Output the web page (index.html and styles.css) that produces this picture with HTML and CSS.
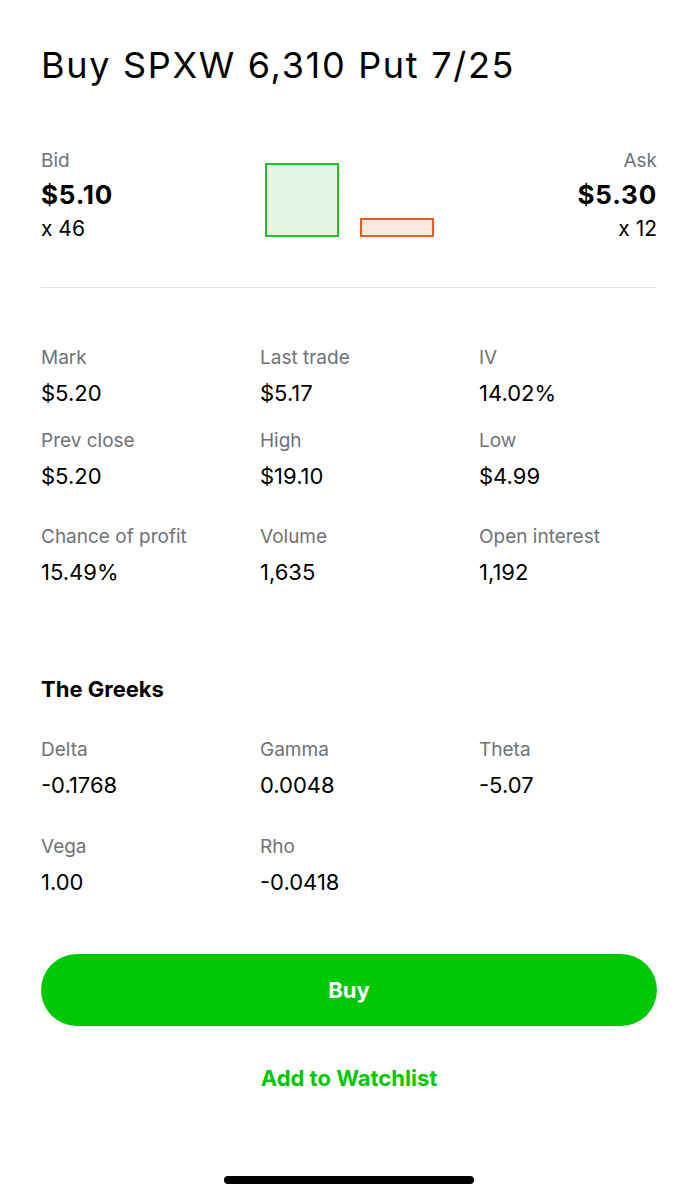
FILE: index.html
```html
<!DOCTYPE html>
<html lang="en">
<head>
<meta charset="utf-8">
<title>Buy SPXW 6,310 Put 7/25</title>
<link rel="stylesheet" href="styles.css">
</head>
<body>
<main class="page">
  <h1 class="title">Buy SPXW 6,310 Put 7/25</h1>

  <section class="quote">
    <div class="quote-side">
      <div class="label">Bid</div>
      <div class="quote-price">$5.10</div>
      <div class="quote-size">x 46</div>
    </div>
    <div class="bars">
      <div class="bar bar--bid"></div>
      <div class="bar bar--ask"></div>
    </div>
    <div class="quote-side quote-side--right">
      <div class="label">Ask</div>
      <div class="quote-price">$5.30</div>
      <div class="quote-size">x 12</div>
    </div>
  </section>

  <hr class="divider">

  <section class="grid stats">
    <div class="cell"><div class="label">Mark</div><div class="value">$5.20</div></div>
    <div class="cell"><div class="label">Last trade</div><div class="value">$5.17</div></div>
    <div class="cell"><div class="label">IV</div><div class="value">14.02%</div></div>
    <div class="cell"><div class="label">Prev close</div><div class="value">$5.20</div></div>
    <div class="cell"><div class="label">High</div><div class="value">$19.10</div></div>
    <div class="cell"><div class="label">Low</div><div class="value">$4.99</div></div>
    <div class="cell cell--spaced"><div class="label">Chance of profit</div><div class="value">15.49%</div></div>
    <div class="cell cell--spaced"><div class="label">Volume</div><div class="value">1,635</div></div>
    <div class="cell cell--spaced"><div class="label">Open interest</div><div class="value">1,192</div></div>
  </section>

  <h2 class="section-title">The Greeks</h2>

  <section class="grid greeks">
    <div class="cell"><div class="label">Delta</div><div class="value">-0.1768</div></div>
    <div class="cell"><div class="label">Gamma</div><div class="value">0.0048</div></div>
    <div class="cell"><div class="label">Theta</div><div class="value">-5.07</div></div>
    <div class="cell"><div class="label">Vega</div><div class="value">1.00</div></div>
    <div class="cell"><div class="label">Rho</div><div class="value">-0.0418</div></div>
  </section>

  <button class="buy-btn" type="button">Buy</button>
  <a class="watch-link" href="#">Add to Watchlist</a>

  <div class="home-indicator"></div>
</main>
</body>
</html>
```

FILE: styles.css
```css
* { box-sizing: border-box; }

html, body {
  margin: 0;
  padding: 0;
  background: #ffffff;
}

body {
  font-family: Inter, "Liberation Sans", Arial, sans-serif;
  color: #000000;
}

.page {
  padding: 43px 41px 0 41px;
  display: flex;
  flex-direction: column;
}

.title {
  margin: 0;
  font-size: 36px;
  line-height: 44px;
  font-weight: 400;
  letter-spacing: 1.7px;
}

.label {
  font-size: 19px;
  line-height: 24px;
  color: #6f7377;
}

/* Quote */
.quote {
  margin-top: 62px;
  display: grid;
  grid-template-columns: 1fr auto 1fr;
}

.quote-side--right {
  text-align: right;
}

.quote-price {
  margin-top: 6px;
  font-size: 26px;
  line-height: 32px;
  font-weight: 700;
  letter-spacing: 0.8px;
}

.quote-size {
  margin-top: 5px;
  font-size: 21px;
  line-height: 26px;
}

.bars {
  align-self: end;
  margin-bottom: 5px;
  display: flex;
  align-items: flex-end;
  gap: 21px;
}

.bar {
  width: 74px;
  border-width: 2px;
  border-style: solid;
}

.bar--bid {
  height: 74px;
  border-color: #22c22b;
  background: #e4f7e4;
}

.bar--ask {
  height: 19px;
  border-color: #ee5b1d;
  background: #fde9e3;
}

.divider {
  margin: 45px 0 0 0;
  border: 0;
  height: 1px;
  background: #e3e3e3;
}

/* Grids */
.grid {
  display: grid;
  grid-template-columns: 219px 219px 1fr;
}

.stats {
  margin-top: 58px;
  row-gap: 22px;
}

.cell--spaced {
  margin-top: 13px;
}

.greeks {
  margin-top: 35px;
  row-gap: 36px;
}

.value {
  margin-top: 9px;
  font-size: 22px;
  line-height: 28px;
}

.section-title {
  margin: 89px 0 0 0;
  font-size: 22px;
  line-height: 28px;
  font-weight: 700;
}

/* Actions */
.buy-btn {
  margin-top: 58px;
  height: 72px;
  width: 100%;
  border: 0;
  border-radius: 36px;
  background: #00c805;
  color: #ffffff;
  font-family: inherit;
  font-size: 22px;
  font-weight: 700;
  cursor: pointer;
}

.watch-link {
  margin-top: 38px;
  align-self: center;
  font-size: 22px;
  line-height: 28px;
  font-weight: 700;
  color: #00c805;
  text-decoration: none;
}

.home-indicator {
  margin-top: 84px;
  align-self: center;
  width: 250px;
  height: 8px;
  border-radius: 4px;
  background: #000000;
}
```
